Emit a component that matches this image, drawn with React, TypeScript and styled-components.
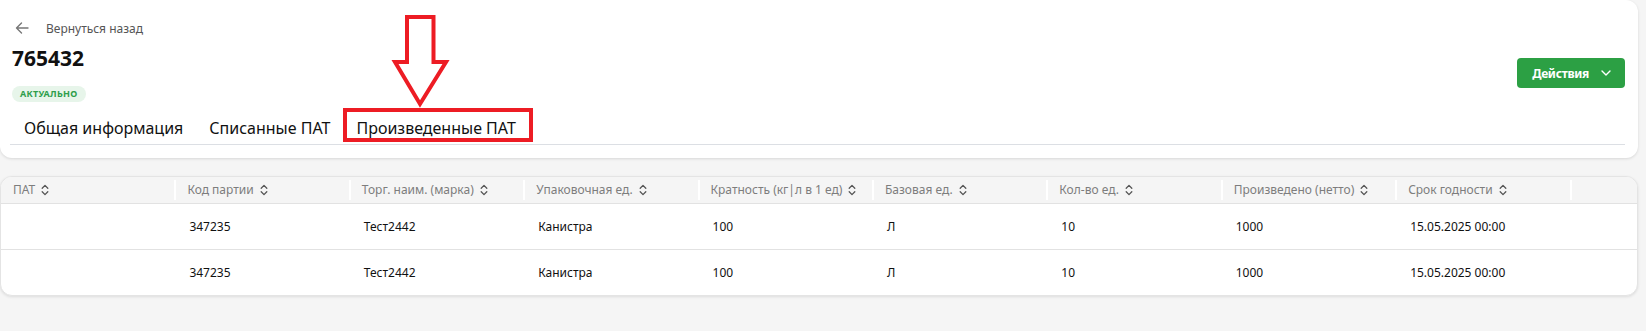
import styled, { createGlobalStyle } from "styled-components";

const GlobalStyle = createGlobalStyle`
  html, body {
    margin: 0;
    padding: 0;
    background: #f5f5f5;
    font-family: "Noto Sans", "Open Sans", Arial, sans-serif;
    color: #111;
  }
  * {
    box-sizing: border-box;
  }
`;

const columns = [
  "ПАТ",
  "Код партии",
  "Торг. наим. (марка)",
  "Упаковочная ед.",
  "Кратность (кг|л в 1 ед)",
  "Базовая ед.",
  "Кол-во ед.",
  "Произведено (нетто)",
  "Срок годности",
];

const rows = [
  ["", "347235", "Тест2442", "Канистра", "100", "Л", "10", "1000", "15.05.2025 00:00"],
  ["", "347235", "Тест2442", "Канистра", "100", "Л", "10", "1000", "15.05.2025 00:00"],
];

const tabs = ["Общая информация", "Списанные ПАТ", "Произведенные ПАТ"];

function SortIcon() {
  return (
    <svg width="8" height="14" viewBox="0 0 8 14" fill="none">
      <path d="M1.2 5.2 L4 2.4 L6.8 5.2" stroke="#555" strokeWidth="1.3" strokeLinecap="round" strokeLinejoin="round" />
      <path d="M1.2 8.8 L4 11.6 L6.8 8.8" stroke="#555" strokeWidth="1.3" strokeLinecap="round" strokeLinejoin="round" />
    </svg>
  );
}

function Annotation() {
  return (
    <AnnotationLayer width="560" height="160" viewBox="0 0 560 160">
      <polygon
        points="407,17 433.5,17 433.5,62 446,62 420,104 395,62 407,62"
        fill="none"
        stroke="#ed1c24"
        strokeWidth="4"
        strokeLinejoin="miter"
      />
      <rect x="345" y="110" width="186" height="30" fill="none" stroke="#ed1c24" strokeWidth="4" />
    </AnnotationLayer>
  );
}

export default function App() {
  return (
    <Page>
      <GlobalStyle />
      <HeaderCard>
        <HeaderTop>
          <HeaderInfo>
            <BackLink type="button">
              <svg width="14" height="14" viewBox="0 0 14 14" fill="none">
                <path d="M13 7 H1.5 M6.5 2 L1.5 7 L6.5 12" stroke="#777" strokeWidth="1.4" strokeLinecap="round" strokeLinejoin="round" />
              </svg>
              <span>Вернуться назад</span>
            </BackLink>
            <Title>765432</Title>
            <Badge>Актуально</Badge>
          </HeaderInfo>
          <ActionButton type="button">
            Действия
            <svg width="10" height="6" viewBox="0 0 10 6" fill="none">
              <path d="M1 1 L5 5 L9 1" stroke="#fff" strokeWidth="1.4" strokeLinecap="round" strokeLinejoin="round" />
            </svg>
          </ActionButton>
        </HeaderTop>
        <Tabs>
          {tabs.map((tab) => (
            <Tab key={tab}>{tab}</Tab>
          ))}
        </Tabs>
        <Annotation />
      </HeaderCard>

      <TableCard>
        <Table>
          <thead>
            <tr>
              {columns.map((col) => (
                <Th key={col}>
                  <HeadCell>
                    {col}
                    <SortIcon />
                  </HeadCell>
                </Th>
              ))}
              <Th $last />
            </tr>
          </thead>
          <tbody>
            {rows.map((row, i) => (
              <Tr key={i}>
                {row.map((cell, j) => (
                  <Td key={j}>{cell}</Td>
                ))}
                <Td />
              </Tr>
            ))}
          </tbody>
        </Table>
      </TableCard>
    </Page>
  );
}

const Page = styled.div`
  width: 1646px;
  height: 331px;
  padding: 0 8px 0 0;
  display: flex;
  flex-direction: column;
  align-items: stretch;
  gap: 18px;
  background: #f5f5f5;
  overflow: hidden;
`;

const HeaderCard = styled.section`
  position: relative;
  flex-shrink: 0;
  background: #fff;
  border-radius: 0 12px 12px 12px;
  box-shadow: 0 1px 3px rgba(0, 0, 0, 0.12);
  padding: 16px 13px 13px 12px;
  height: 158px;
`;

const HeaderTop = styled.div`
  display: flex;
  align-items: flex-start;
  justify-content: space-between;
`;

const HeaderInfo = styled.div`
  display: flex;
  flex-direction: column;
  align-items: flex-start;
`;

const BackLink = styled.button`
  display: flex;
  align-items: center;
  gap: 17px;
  height: 24px;
  padding: 0 0 0 3px;
  border: 0;
  background: none;
  font-family: inherit;
  font-size: 12px;
  color: #555;
  cursor: pointer;
`;

const Title = styled.h1`
  margin: 4px 0 0;
  font-size: 21px;
  line-height: 28px;
  font-weight: 700;
  color: #111;
`;

const Badge = styled.span`
  margin-top: 14px;
  height: 16px;
  padding: 0 8px;
  border-radius: 8px;
  background: #e7f5ea;
  color: #2e9e4a;
  font-size: 9px;
  font-weight: 700;
  line-height: 16px;
  text-transform: uppercase;
  letter-spacing: 0.3px;
`;

const ActionButton = styled.button`
  display: flex;
  align-items: center;
  gap: 12px;
  height: 30px;
  padding: 0 14px 0 15px;
  margin-top: 42px;
  border: 0;
  border-radius: 4px;
  background: #2ca044;
  color: #fff;
  font-family: inherit;
  font-size: 12px;
  font-weight: 700;
  letter-spacing: -0.3px;
  cursor: pointer;
`;

const Tabs = styled.nav`
  display: flex;
  margin: 10px 0 0 -2px;
  border-bottom: 1px solid #dcdfe4;
  height: 33px;
`;

const Tab = styled.div`
  padding: 0 12px 0 14px;
  font-size: 16px;
  line-height: 32px;
  color: #111;
`;

const AnnotationLayer = styled.svg`
  position: absolute;
  left: 0;
  top: 0;
  pointer-events: none;
`;

const TableCard = styled.section`
  flex-shrink: 0;
  background: #fff;
  border: 1px solid #e4e4e4;
  border-radius: 12px;
  box-shadow: 0 1px 3px rgba(0, 0, 0, 0.1);
  overflow: hidden;
`;

const Table = styled.table`
  width: 100%;
  border-collapse: collapse;
  table-layout: fixed;
  font-size: 12px;

  th:not(:last-child),
  td:not(:last-child) {
    width: 174.4px;
  }
`;

const Th = styled.th<{ $last?: boolean }>`
  position: relative;
  height: 26px;
  padding: 0 0 0 ${({ $last }) => ($last ? 0 : 12)}px;
  background: #f5f5f5;
  border-bottom: 1px solid #e2e2e2;
  text-align: left;
  font-weight: 400;
  color: #7d7d7d;

  &:not(:first-child)::before {
    content: "";
    position: absolute;
    left: -1px;
    top: 3px;
    bottom: 3px;
    width: 2px;
    background: #fff;
  }
`;

const HeadCell = styled.span`
  display: inline-flex;
  align-items: center;
  gap: 6px;
  white-space: nowrap;
`;

const Tr = styled.tr`
  &:not(:last-child) td {
    border-bottom: 1px solid #e2e2e2;
  }
`;

const Td = styled.td`
  height: 46px;
  padding: 0 0 0 14px;
  color: #111;
  white-space: nowrap;
`;
